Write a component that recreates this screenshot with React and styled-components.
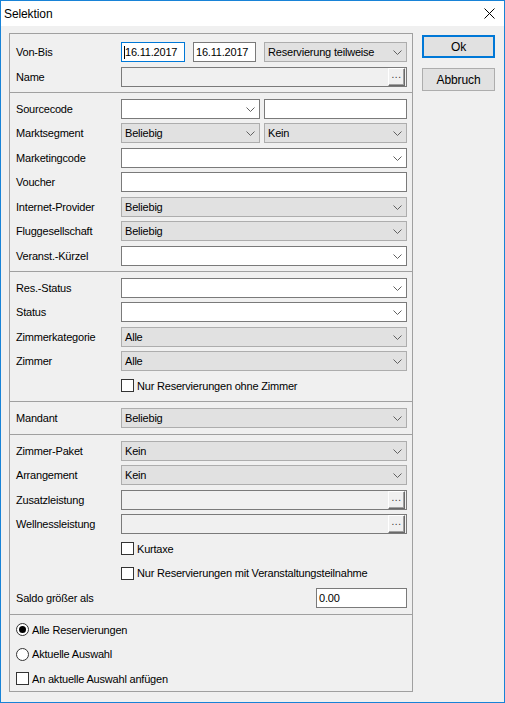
import React from 'react';
import styled, { createGlobalStyle } from 'styled-components';

const GlobalStyle = createGlobalStyle`
    * { box-sizing: border-box; }
    body {
        margin: 0;
        background: #f0f0f0;
        font-family: "Liberation Sans", Arial, sans-serif;
        font-size: 11px;
        letter-spacing: -0.2px;
        color: #000;
    }
`;

const Chevron = () => (
    <svg width="9" height="5" viewBox="0 0 9 5">
        <polyline points="0.5,0.5 4.5,4.5 8.5,0.5" fill="none" stroke="#606060" strokeWidth="1" />
    </svg>
);

const Combo = ({ value = '', gray, width }) => (
    <ComboBox $gray={gray} $width={width}>
        <span>{value}</span>
        <Chevron />
    </ComboBox>
);

const Browse = () => (
    <BrowseBox>
        <DotsButton>...</DotsButton>
    </BrowseBox>
);

const Check = ({ label }) => (
    <CheckLabel>
        <CheckBox />
        {label}
    </CheckLabel>
);

const Radio = ({ label, checked }) => (
    <CheckLabel>
        <RadioCircle $checked={checked} />
        {label}
    </CheckLabel>
);

export default function App() {
    return (
        <>
            <GlobalStyle />
            <Window>
                <TitleBar>
                    <Title>Selektion</Title>
                    <svg width="11" height="11" viewBox="0 0 11 11">
                        <path d="M0.5 0.5 L10.5 10.5 M10.5 0.5 L0.5 10.5" stroke="#000" strokeWidth="1" />
                    </svg>
                </TitleBar>
                <Body>
                    <Panel>
                        <Section $pt={8} $pb={5} $first>
                            <Row>
                                <Label>Von-Bis</Label>
                                <Fields $gap={8}>
                                    <TextBox $width={64} $focused><Caret />16.11.2017</TextBox>
                                    <TextBox $width={63}>16.11.2017</TextBox>
                                    <Combo gray value="Reservierung teilweise" />
                                </Fields>
                            </Row>
                            <Row>
                                <Label>Name</Label>
                                <Browse />
                            </Row>
                        </Section>

                        <Section $pt={6} $pb={5}>
                            <Row>
                                <Label>Sourcecode</Label>
                                <Fields $gap={4}>
                                    <Combo width={139} />
                                    <TextBox />
                                </Fields>
                            </Row>
                            <Row>
                                <Label>Marktsegment</Label>
                                <Fields $gap={4}>
                                    <Combo gray width={139} value="Beliebig" />
                                    <Combo gray value="Kein" />
                                </Fields>
                            </Row>
                            <Row>
                                <Label>Marketingcode</Label>
                                <Combo />
                            </Row>
                            <Row>
                                <Label>Voucher</Label>
                                <TextBox />
                            </Row>
                            <Row>
                                <Label>Internet-Provider</Label>
                                <Combo gray value="Beliebig" />
                            </Row>
                            <Row>
                                <Label>Fluggesellschaft</Label>
                                <Combo gray value="Beliebig" />
                            </Row>
                            <Row>
                                <Label>Veranst.-Kürzel</Label>
                                <Combo />
                            </Row>
                        </Section>

                        <Section $pt={6} $pb={5}>
                            <Row>
                                <Label>Res.-Status</Label>
                                <Combo />
                            </Row>
                            <Row>
                                <Label>Status</Label>
                                <Combo />
                            </Row>
                            <Row>
                                <Label>Zimmerkategorie</Label>
                                <Combo gray value="Alle" />
                            </Row>
                            <Row>
                                <Label>Zimmer</Label>
                                <Combo gray value="Alle" />
                            </Row>
                            <Row>
                                <span />
                                <Check label="Nur Reservierungen ohne Zimmer" />
                            </Row>
                        </Section>

                        <Section $pt={6} $pb={6}>
                            <Row>
                                <Label>Mandant</Label>
                                <Combo gray value="Beliebig" />
                            </Row>
                        </Section>

                        <Section $pt={6} $pb={6}>
                            <Row>
                                <Label>Zimmer-Paket</Label>
                                <Combo gray value="Kein" />
                            </Row>
                            <Row>
                                <Label>Arrangement</Label>
                                <Combo gray value="Kein" />
                            </Row>
                            <Row>
                                <Label>Zusatzleistung</Label>
                                <Browse />
                            </Row>
                            <Row>
                                <Label>Wellnessleistung</Label>
                                <Browse />
                            </Row>
                            <Row>
                                <span />
                                <Check label="Kurtaxe" />
                            </Row>
                            <Row>
                                <span />
                                <Check label="Nur Reservierungen mit Veranstaltungsteilnahme" />
                            </Row>
                            <Row>
                                <Label>Saldo größer als</Label>
                                <Fields $end>
                                    <TextBox $width={91}>0.00</TextBox>
                                </Fields>
                            </Row>
                        </Section>

                        <Section $pt={5} $pb={1}>
                            <Row $single>
                                <Radio checked label="Alle Reservierungen" />
                            </Row>
                            <Row $single>
                                <Radio label="Aktuelle Auswahl" />
                            </Row>
                            <Row $single>
                                <Check label="An aktuelle Auswahl anfügen" />
                            </Row>
                        </Section>
                    </Panel>

                    <ButtonColumn>
                        <DialogButton $default>Ok</DialogButton>
                        <DialogButton>Abbruch</DialogButton>
                    </ButtonColumn>
                </Body>
            </Window>
        </>
    );
}

const Window = styled.div`
    width: 505px;
    height: 703px;
    border: 1px solid #1883d7;
    background: #f0f0f0;
    display: flex;
    flex-direction: column;
`;

const TitleBar = styled.div`
    height: 25px;
    background: #fff;
    display: flex;
    align-items: center;
    justify-content: space-between;
    padding: 0 9px 0 3px;
`;

const Title = styled.span`
    font-size: 12px;
    letter-spacing: -0.1px;
`;

const Body = styled.div`
    display: flex;
    align-items: flex-start;
    gap: 9px;
    padding: 7px 0 0 8px;
`;

const Panel = styled.div`
    width: 404px;
    height: 659px;
    border: 1px solid #a0a0a0;
    display: flex;
    flex-direction: column;
`;

const Section = styled.div`
    display: flex;
    flex-direction: column;
    gap: 4.5px;
    padding: ${p => p.$pt}px 5px ${p => p.$pb}px 6px;
    border-top: ${p => (p.$first ? 'none' : '1px solid #a0a0a0')};
`;

const Row = styled.div`
    display: grid;
    grid-template-columns: ${p => (p.$single ? '1fr' : '105px 1fr')};
    align-items: center;
    height: 20px;
`;

const Label = styled.span`
    white-space: nowrap;
`;

const Fields = styled.div`
    display: flex;
    gap: ${p => p.$gap || 0}px;
    justify-content: ${p => (p.$end ? 'flex-end' : 'flex-start')};
    height: 20px;
`;

const TextBox = styled.div`
    display: flex;
    align-items: center;
    height: 20px;
    ${p => (p.$width ? `width: ${p.$width}px; flex: none;` : 'flex: 1;')}
    background: #fff;
    border: 1px solid ${p => (p.$focused ? '#0078d7' : '#7a7a7a')};
    padding-left: 2px;
    white-space: nowrap;
    overflow: hidden;
`;

const Caret = styled.span`
    width: 1px;
    height: 13px;
    background: #000;
`;

const ComboBox = styled.div`
    display: flex;
    align-items: center;
    justify-content: space-between;
    height: 20px;
    ${p => (p.$width ? `width: ${p.$width}px; flex: none;` : 'flex: 1;')}
    background: ${p => (p.$gray ? '#e1e1e1' : '#fff')};
    border: 1px solid ${p => (p.$gray ? '#adadad' : '#7a7a7a')};
    padding: 0 4px 0 3px;
    white-space: nowrap;

    svg {
        flex: none;
        margin-top: 1px;
    }
`;

const BrowseBox = styled.div`
    display: flex;
    justify-content: flex-end;
    height: 20px;
    background: #f0f0f0;
    border: 1px solid #7a7a7a;
    padding: 0 1px 0 0;
`;

const DotsButton = styled.div`
    width: 17px;
    height: 18px;
    background: #f0f0f0;
    border-top: 1px solid #fff;
    border-left: 1px solid #fff;
    border-right: 1px solid #696969;
    border-bottom: 1px solid #696969;
    box-shadow: inset -1px -1px 0 #a0a0a0;
    font-size: 10px;
    letter-spacing: 0.5px;
    line-height: 12px;
    text-align: center;
    color: #333;
`;

const CheckLabel = styled.label`
    display: flex;
    align-items: center;
    gap: 3px;
    white-space: nowrap;
`;

const CheckBox = styled.span`
    width: 13px;
    height: 13px;
    flex: none;
    border: 1px solid #333;
    background: #fff;
`;

const RadioCircle = styled.span`
    width: 13px;
    height: 13px;
    flex: none;
    border: 1px solid #333;
    border-radius: 50%;
    background: #fff;
    display: flex;
    align-items: center;
    justify-content: center;

    &::after {
        content: '';
        display: ${p => (p.$checked ? 'block' : 'none')};
        width: 7px;
        height: 7px;
        border-radius: 50%;
        background: #000;
    }
`;

const ButtonColumn = styled.div`
    display: flex;
    flex-direction: column;
    gap: 10px;
    margin-top: 2px;
`;

const DialogButton = styled.div`
    width: 73px;
    height: 23px;
    display: flex;
    align-items: center;
    justify-content: center;
    font-size: 12px;
    letter-spacing: -0.1px;
    background: #e1e1e1;
    border: ${p => (p.$default ? '2px solid #0078d7' : '1px solid #adadad')};
`;
